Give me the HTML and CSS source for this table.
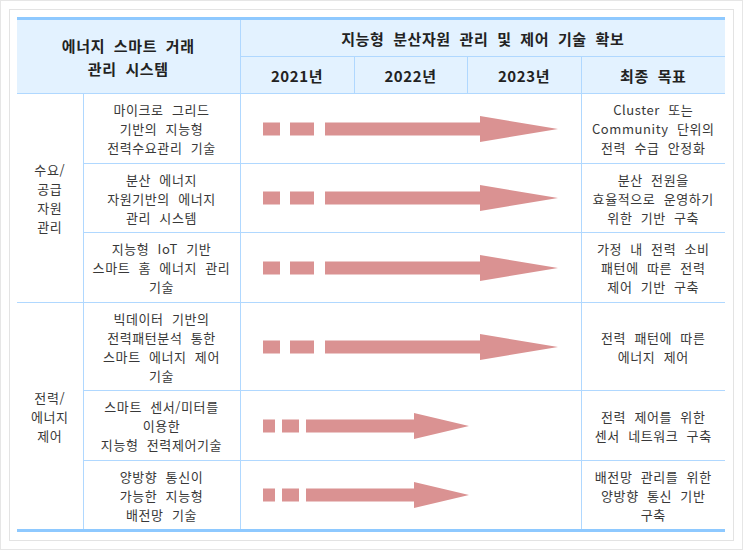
FILE: index.html
```html
<!DOCTYPE html>
<html lang="ko">
<head>
<meta charset="utf-8">
<link rel="stylesheet" href="styles.css">
</head>
<body>
<div class="outer">
  <div class="inner">
    <table class="plan">
      <colgroup>
        <col class="c-group"><col class="c-item"><col class="c-year"><col class="c-year2"><col class="c-year"><col class="c-goal">
      </colgroup>
      <thead>
        <tr class="h1">
          <th colspan="2" rowspan="2" class="title">에너지 스마트 거래<br>관리 시스템</th>
          <th colspan="4" class="span">지능형 분산자원 관리 및 제어 기술 확보</th>
        </tr>
        <tr class="h2">
          <th>2021년</th>
          <th>2022년</th>
          <th>2023년</th>
          <th>최종 목표</th>
        </tr>
      </thead>
      <tbody>
        <tr class="r70">
          <td rowspan="3" class="group">수요/<br>공급<br>자원<br>관리</td>
          <td class="item">마이크로 그리드<br>기반의 지능형<br>전력수요관리 기술</td>
          <td colspan="3" class="bar"><svg class="arrow" viewBox="0 0 341 28" width="341" height="28"><rect x="22" y="7.5" width="17" height="13"/><rect x="49" y="7.5" width="24" height="13"/><polygon points="84,7.5 239,7.5 239,1 317,14 239,27 239,20.5 84,20.5"/></svg></td>
          <td class="goal">Cluster 또는<br>Community 단위의<br>전력 수급 안정화</td>
        </tr>
        <tr class="r69">
          <td class="item">분산 에너지<br>자원기반의 에너지<br>관리 시스템</td>
          <td colspan="3" class="bar"><svg class="arrow" viewBox="0 0 341 28" width="341" height="28"><rect x="22" y="7.5" width="17" height="13"/><rect x="49" y="7.5" width="24" height="13"/><polygon points="84,7.5 239,7.5 239,1 317,14 239,27 239,20.5 84,20.5"/></svg></td>
          <td class="goal">분산 전원을<br>효율적으로 운영하기<br>위한 기반 구축</td>
        </tr>
        <tr class="r70">
          <td class="item">지능형 IoT 기반<br>스마트 홈 에너지 관리<br>기술</td>
          <td colspan="3" class="bar"><svg class="arrow" viewBox="0 0 341 28" width="341" height="28"><rect x="22" y="7.5" width="17" height="13"/><rect x="49" y="7.5" width="24" height="13"/><polygon points="84,7.5 239,7.5 239,1 317,14 239,27 239,20.5 84,20.5"/></svg></td>
          <td class="goal">가정 내 전력 소비<br>패턴에 따른 전력<br>제어 기반 구축</td>
        </tr>
        <tr class="r88">
          <td rowspan="3" class="group">전력/<br>에너지<br>제어</td>
          <td class="item">빅데이터 기반의<br>전력패턴분석 통한<br>스마트 에너지 제어<br>기술</td>
          <td colspan="3" class="bar"><svg class="arrow" viewBox="0 0 341 28" width="341" height="28"><rect x="22" y="7.5" width="17" height="13"/><rect x="49" y="7.5" width="24" height="13"/><polygon points="84,7.5 239,7.5 239,1 317,14 239,27 239,20.5 84,20.5"/></svg></td>
          <td class="goal">전력 패턴에 따른<br>에너지 제어</td>
        </tr>
        <tr class="r70">
          <td class="item">스마트 센서/미터를<br>이용한<br>지능형 전력제어기술</td>
          <td colspan="3" class="bar"><svg class="arrow" viewBox="0 0 341 28" width="341" height="28"><rect x="22" y="7.5" width="12" height="13"/><rect x="41" y="7.5" width="17" height="13"/><polygon points="65,7.5 173,7.5 173,1 228,14 173,27 173,20.5 65,20.5"/></svg></td>
          <td class="goal">전력 제어를 위한<br>센서 네트워크 구축</td>
        </tr>
        <tr class="r70">
          <td class="item">양방향 통신이<br>가능한 지능형<br>배전망 기술</td>
          <td colspan="3" class="bar"><svg class="arrow" viewBox="0 0 341 28" width="341" height="28"><rect x="22" y="7.5" width="12" height="13"/><rect x="41" y="7.5" width="17" height="13"/><polygon points="65,7.5 173,7.5 173,1 228,14 173,27 173,20.5 65,20.5"/></svg></td>
          <td class="goal">배전망 관리를 위한<br>양방향 통신 기반<br>구축</td>
        </tr>
      </tbody>
    </table>
  </div>
</div>
</body>
</html>
```

FILE: styles.css
```css
html, body {
  margin: 0;
  padding: 0;
  background: #ffffff;
}
.outer {
  width: 743px;
  height: 550px;
  box-sizing: border-box;
  border: 1px solid #e6e6e6;
  padding: 8px;
}
.inner {
  height: 100%;
  box-sizing: border-box;
  border: 1px solid #e3e3e3;
  padding: 7px 7px 9px 7px;
}
.plan {
  width: 708px;
  border-collapse: collapse;
  table-layout: fixed;
  font-family: "Noto Sans CJK KR", "Noto Sans", sans-serif;
  font-size: 13px;
  line-height: 19px;
  letter-spacing: 0.6px;
  word-spacing: 4px;
  color: #383838;
  border-top: 3px solid #8ec9ff;
  border-bottom: 3px solid #8ec9ff;
}
.c-group { width: 66px; }
.c-item { width: 157px; }
.c-year { width: 114px; }
.c-year2 { width: 113px; }
.c-goal { width: 144px; }

.plan th, .plan td {
  border: 1px solid #b0d8ff;
  padding: 0;
  text-align: center;
  vertical-align: middle;
}
.plan tr > :first-child { border-left: none; }
.plan tr > :last-child { border-right: none; }

.plan th {
  background: #e3f2ff;
  font-weight: bold;
  font-size: 15px;
  letter-spacing: 0.6px;
  word-spacing: 4px;
  color: #222222;
}
.h1 { height: 38px; }
.h2 { height: 37px; }
.title { line-height: 23px; border-left: none; }
.span { border-right: none; }

.r70 { height: 70px; }
.r69 { height: 69px; }
.r88 { height: 88px; }

.group { border-left: none; }
.item, .goal { padding: 0 2px; }
.bar svg { display: block; }
.arrow { fill: #da9292; }
```
